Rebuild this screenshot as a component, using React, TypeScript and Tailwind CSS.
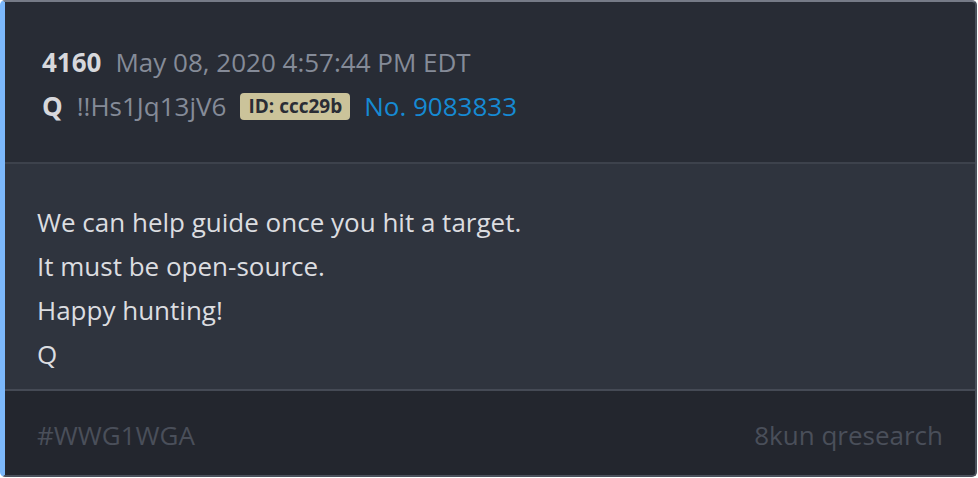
export default function App() {
  return (
    <div className="h-[478px] w-[978px] bg-white font-['Open_Sans',sans-serif]">
      <div className="flex h-[477px] w-[977px] flex-col overflow-hidden rounded-[5px] border-2 border-l-[5px] border-[#4a505b] border-t-[#767b87] border-l-[#7cb8fb] bg-[#282c35]">
        {/* Header */}
        <div className="flex h-[160px] shrink-0 flex-col justify-center pl-[37px] pt-[4px] text-[26px] leading-[44px]">
          <div className="flex items-center">
            <span className="font-bold text-[#d7d8dc]">4160</span>
            <span className="ml-[14px] text-[#858b98]">May 08, 2020 4:57:44 PM EDT</span>
          </div>
          <div className="flex items-center">
            <span className="font-bold text-[#d7d8dc]">Q</span>
            <span className="ml-[14px] text-[#858b98]">!!Hs1Jq13jV6</span>
            <span className="ml-[14px] rounded-[4px] bg-[#cbc39a] px-[8px] text-[19px] font-bold leading-[27px] text-[#2a2d35]">
              ID: ccc29b
            </span>
            <span className="ml-[14px] text-[#168ad3]">No. 9083833</span>
          </div>
        </div>

        <div className="h-[2px] shrink-0 bg-[#3d424c]" />

        {/* Body */}
        <div className="flex h-[225px] shrink-0 flex-col bg-[#2f343e] pl-[32px] pt-[36px] text-[26px] leading-[44px] text-[#dcdde0]">
          <p>We can help guide once you hit a target.</p>
          <p>It must be open-source.</p>
          <p>Happy hunting!</p>
          <p>Q</p>
        </div>

        <div className="h-[2px] shrink-0 bg-[#454a55]" />

        {/* Footer */}
        <div className="flex flex-1 items-center justify-between bg-[#23262e] pl-[32px] pr-[32px] pt-[4px] text-[26px] text-[#4a4f5a]">
          <span>#WWG1WGA</span>
          <span>8kun qresearch</span>
        </div>
      </div>
    </div>
  )
}
